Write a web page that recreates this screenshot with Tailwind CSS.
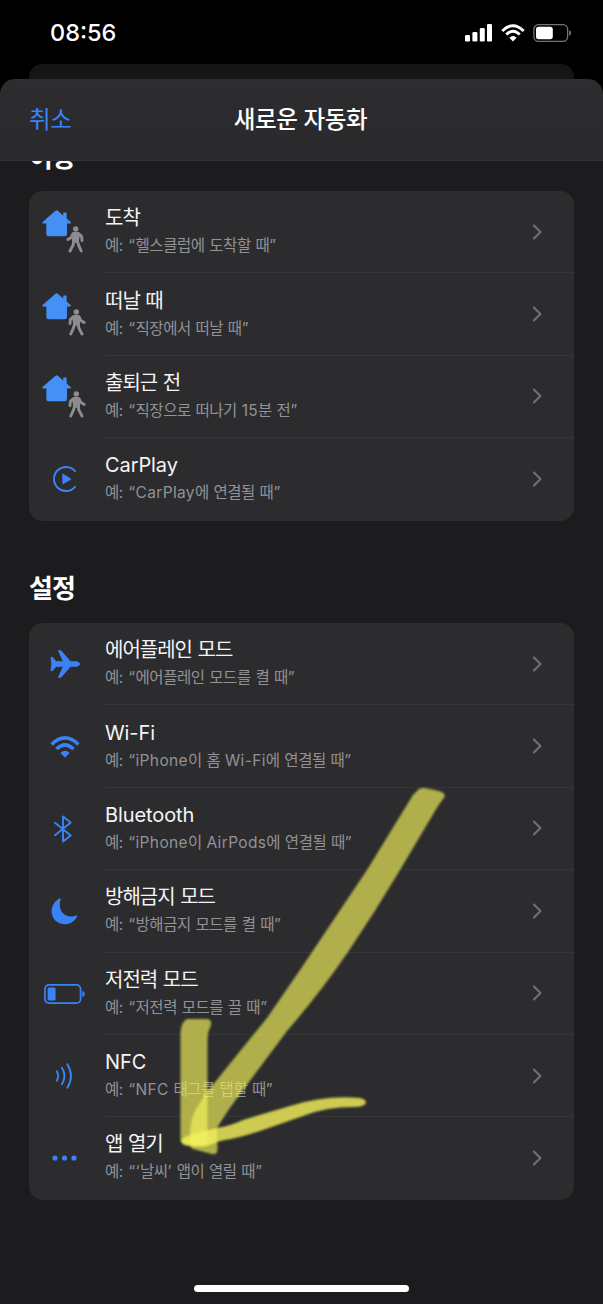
<!DOCTYPE html>
<html lang="ko">
<head>
<meta charset="utf-8">
<title>새로운 자동화</title>
<script src="https://cdn.jsdelivr.net/npm/@tailwindcss/browser@4"></script>
</head>
<body class="bg-black">
<svg class="hidden">
  <symbol id="chev" viewBox="0 0 10 16"><path d="M1.4 1.6 8 8l-6.6 6.4" fill="none" stroke="#707074" stroke-width="2.1" stroke-linecap="round" stroke-linejoin="round"/></symbol>
  <symbol id="house" viewBox="0 0 30 27"><path d="M13.400.7Q14.600-.2 15.800.7L21.200 5.400V3.300Q21.200 2.500 22 2.500H23.800Q24.600 2.500 24.600 3.300V8.400L28.600 11.900Q29.600 13.200 28 13.500H25V24Q25 26.300 22.700 26.300H6.600Q4.300 26.300 4.300 24V13.500H1.200Q-.4 13.200.6 11.900Z" fill="#4490f5"/></symbol>
  <symbol id="walk" viewBox="0 0 18 27"><circle cx="9.700" cy="2.900" r="2.700" fill="#8d8d91"/><path d="M7.300 6.100Q9.600 5.400 12 6.100L14 8 12.800 15.500 10 17 6 15 6.200 7.500Z" fill="#8d8d91"/><path d="M7 7.800 5.100 11.400 1.900 13.400M12.600 7.600 15.600 10.300 16 14.600M7.600 14 7.300 18.700 4 25M11.200 14.500 12.600 19.200 15.200 25" fill="none" stroke="#8d8d91" stroke-width="2.900" stroke-linecap="round" stroke-linejoin="round"/></symbol>
  <symbol id="wifi" viewBox="0 0 30 22"><path d="M1.600 8.400Q15-4.600 28.400 8.400M6.500 13Q15 4.700 23.500 13" fill="none" stroke="currentColor" stroke-width="3.500"/><path d="M10.400 17Q15 12.700 19.600 17L15 21.600Z" fill="currentColor"/></symbol>
</svg>
<div class="relative flex h-[1304px] w-[603px] flex-col overflow-hidden bg-black font-['Inter','Noto_Sans_CJK_KR',sans-serif] text-[#f4f4f5]">
  <header class="flex h-16 shrink-0 items-center justify-between pt-[2px] pr-[31px] pl-[50px]">
    <time class="text-[23.500px] font-medium tracking-[0px] text-white">08:56</time>
    <div class="flex items-center gap-[8px] text-white">
      <svg class="h-[18px] w-[28px]" viewBox="0 0 28 18" fill="currentColor"><rect x="0" y="11" width="5" height="6.500" rx="1.300"/><rect x="7.400" y="8" width="5" height="9.500" rx="1.300"/><rect x="14.800" y="4" width="5" height="13.500" rx="1.300"/><rect x="22" y="0" width="5" height="17.500" rx="1.300"/></svg>
      <svg class="h-[18px] w-[24px]"><use href="#wifi"/></svg>
      <svg class="h-[18px] w-[39px]" viewBox="0 0 39 18"><rect x=".9" y=".7" width="33.700" height="16.600" rx="4.600" fill="none" stroke="#737373" stroke-width="1.300"/><rect x="3" y="2.800" width="16.800" height="12.400" rx="2.600" fill="#fff"/><path d="M36.200 6.200q2 .7 2 2.800t-2 2.800z" fill="#737373"/></svg>
    </div>
  </header>
  <div class="mx-[29px] h-[15px] shrink-0 rounded-t-[13px] bg-[#151516]"></div>
  <section class="flex flex-1 flex-col bg-[linear-gradient(#151516,#151516)] bg-[length:545px_16px] bg-[position:29px_0] bg-no-repeat">
    <div class="grid h-[82px] shrink-0 grid-cols-3 items-center rounded-t-[15px] border-b border-[#343436] bg-linear-to-b from-[#2d2d2f] to-[#29292b] px-[29px] pt-[1px]">
      <span class="text-[23.500px] tracking-[-0.4px] text-[#3a83f7]">취소</span>
      <h1 class="-ml-[2px] text-center text-[23.500px] font-medium tracking-[-0.350px] whitespace-nowrap text-white">새로운 자동화</h1>
    </div>
    <main class="flex-1 bg-[#1c1c1e] px-[29px]">
      <div class="flex h-[30px] items-start overflow-hidden"><h2 class="-mt-[21px] text-[26px] leading-[36px] font-bold tracking-[-0.6px] text-white">이동</h2></div>
      <div id="travel" class="overflow-hidden rounded-[14px] bg-[#2c2c2e]"></div>
      <div class="flex h-[102.400px] items-center pt-[34px]"><h2 class="text-[26px] leading-9 font-bold tracking-[-0.8px] text-white">설정</h2></div>
      <div id="settings" class="overflow-hidden rounded-[14px] bg-[#2c2c2e]"></div>
    </main>
  </section>
  <svg class="pointer-events-none absolute inset-0 h-[1304px] w-[603px]" viewBox="0 0 603 1304">
    <defs><filter id="soft"><feGaussianBlur stdDeviation=".9"/></filter></defs>
    <g fill="#f5f35a" filter="url(#soft)">
      <path opacity=".66" d="M419 789Q421 787.500 425 788L439 791Q446 793 444.500 797L438 806 400 870Q375 912 348 952Q320 993 287 1031L243 1090Q225 1114 217 1128L217.500 1150Q217 1155 212 1154L193 1149Q190 1148 190 1142V1130Q191 1118 197 1107L207 1092 267 1018 300 970 367 870 413 795Z"/>
      <path opacity=".66" d="M187 1019H207Q212 1019 211 1025L208 1033Q207.500 1038 207.500 1045V1140Q207 1146 200 1146L188 1145Q181 1144 180.500 1140V1033Q181 1022 187 1019Z"/>
      <path opacity=".8" d="M181 1142Q181 1137 193 1134L217 1128Q230 1126 243 1120L290 1106Q325 1095 360 1098 366 1099 366 1103 364 1107 354 1107 325 1107 303 1116L260 1131Q240 1138 220 1141L207 1146Q193 1148 184 1145Z"/>
    </g>
  </svg>
  <div class="absolute bottom-[12px] left-[194px] h-[7px] w-[215px] rounded-full bg-white"></div>
</div>

<template id="row">
  <div class="group flex h-[82.400px] items-stretch">
    <div class="flex w-[71px] shrink-0 items-center justify-center text-[#3a83f7]" data-icon></div>
    <div class="ml-[5px] flex flex-1 items-center justify-between border-b border-[#363638] pr-[31px] group-last:border-transparent">
      <div class="whitespace-nowrap">
        <p class="text-[20px] leading-[28px] tracking-[-1px]" data-title></p>
        <p class="text-[15.500px] leading-[27px] tracking-[-0.450px] text-[#929297]" data-sub></p>
      </div>
      <svg class="h-4 w-[11px]"><use href="#chev"/></svg>
    </div>
  </div>
</template>
<script>
const place = (flip) => `<div class="grid h-[46px] w-[46px] grid-cols-[27px_19px] grid-rows-[18px_28px]">
  <svg class="mt-[1px] h-[27px] w-[30px]"><use href="#house"/></svg><span></span><span></span>
  <svg class="${flip ? '-mt-px h-[27px] w-[18px] -translate-x-px -scale-x-100' : '-mt-px h-[27px] w-[18px] -translate-x-[3px]'}"><use href="#walk"/></svg></div>`;
const icons = {
  arrive: place(false), leave: place(true),
  carplay: `<svg class="h-[28px] w-[26px]" viewBox="0 0 26 28"><path d="M23.100 6.200A12 12 0 1 0 23.100 21.800" fill="none" stroke="currentColor" stroke-width="1.900" stroke-linecap="round"/><path d="M10.300 9.200v9.600q.1.700.8.400l7.600-4.500q.7-.7 0-1.300l-7.600-4.600q-.7-.2-.8.400z" fill="currentColor"/></svg>`,
  plane: `<svg class="h-[28px] w-[30px]" viewBox="0 0 30 28"><path d="M8 .8Q7.700.2 8.400.2H10.200Q11 .2 11.600 1L20.600 11.200H26.200Q29.900 11.900 29.900 14T26.200 16.800H20.600L11.600 27Q11 27.800 10.200 27.800H8.400Q7.700 27.800 8 27.200L12.800 16.800H6.400L2.500 21H1Q.5 21 .5 20.400L1.400 14 .5 7.600Q.5 7 1 7H2.500L6.400 11.200H12.800Z" fill="currentColor"/></svg>`,
  wifi: `<svg class="h-[22px] w-[30px]"><use href="#wifi"/></svg>`,
  bluetooth: `<svg class="-ml-[3px] h-[28px] w-[18px]" viewBox="0 0 18 28"><path d="M1 7.800 16.700 20.400 9 26.600V1.400L16.700 7.600 1 20.200" fill="none" stroke="currentColor" stroke-width="1.900" stroke-linecap="round" stroke-linejoin="round"/></svg>`,
  moon: `<svg class="-ml-px h-[27px] w-[27px]" viewBox="0 0 27 27"><path d="M9.600 1.200C6 11.500 13.500 21.500 25.300 17.600Q26.800 17.200 26 18.700C20.500 29.500 4 28.500 1 16.500C-.5 10 3 3 8.400.5Q9.900 0 9.600 1.200Z" fill="currentColor"/></svg>`,
  battery: `<svg class="-ml-px h-[20px] w-[41px]" viewBox="0 0 41 20"><rect x=".9" y=".9" width="35.700" height="18.200" rx="4.200" fill="none" stroke="currentColor" stroke-width="1.700"/><rect x="3.600" y="3.500" width="8" height="13" rx="1.500" fill="currentColor"/><path d="M38.300 6.700q2.500 1 2.500 3.300t-2.500 3.300z" fill="currentColor"/></svg>`,
  nfc: `<svg class="-ml-px h-[26px] w-[18px]" viewBox="0 0 18 26"><path d="M1.800 8.300Q4.500 13 1.800 17.700M6.900 4.700Q12 13 6.900 21.300M12.300 1.200Q19.700 13 12.300 24.800" fill="none" stroke="currentColor" stroke-width="1.900" stroke-linecap="round"/></svg>`,
  dots: `<svg class="-ml-px h-[6px] w-[25px]" viewBox="0 0 25 6" fill="currentColor"><circle cx="3" cy="3" r="2.600"/><circle cx="12.500" cy="3" r="2.600"/><circle cx="22" cy="3" r="2.600"/></svg>`
};
const data = {
  travel: [['arrive','도착','예: “헬스클럽에 도착할 때”'],['leave','떠날 때','예: “직장에서 떠날 때”'],['leave','출퇴근 전','예: “직장으로 떠나기 15분 전”'],['carplay','CarPlay','예: “CarPlay에 연결될 때”']],
  settings: [['plane','에어플레인 모드','예: “에어플레인 모드를 켤 때”'],['wifi','Wi-Fi','예: “iPhone이 홈 Wi-Fi에 연결될 때”'],['bluetooth','Bluetooth','예: “iPhone이 AirPods에 연결될 때”'],['moon','방해금지 모드','예: “방해금지 모드를 켤 때”'],['battery','저전력 모드','예: “저전력 모드를 끌 때”'],['nfc','NFC','예: “NFC 태그를 탭할 때”'],['dots','앱 열기','예: “‘날씨’ 앱이 열릴 때”']]
};
// Latin runs keep wider tracking than the Hangul around them
const latin = (s, cls) => s.replace(/[A-Za-z0-9\-]+|[:“”‘’ ]+/g, m => `<span class="${cls}">${m}</span>`);
for (const [id, rows] of Object.entries(data)) for (const [icon, title, sub] of rows) {
  const n = document.getElementById('row').content.cloneNode(true);
  n.querySelector('[data-icon]').innerHTML = icons[icon];
  n.querySelector('[data-title]').innerHTML = latin(title, 'tracking-[-0.1px]');
  n.querySelector('[data-sub]').innerHTML = latin(sub, 'tracking-[0.350px]');
  document.getElementById(id).append(n);
}
</script>
</body>
</html>
